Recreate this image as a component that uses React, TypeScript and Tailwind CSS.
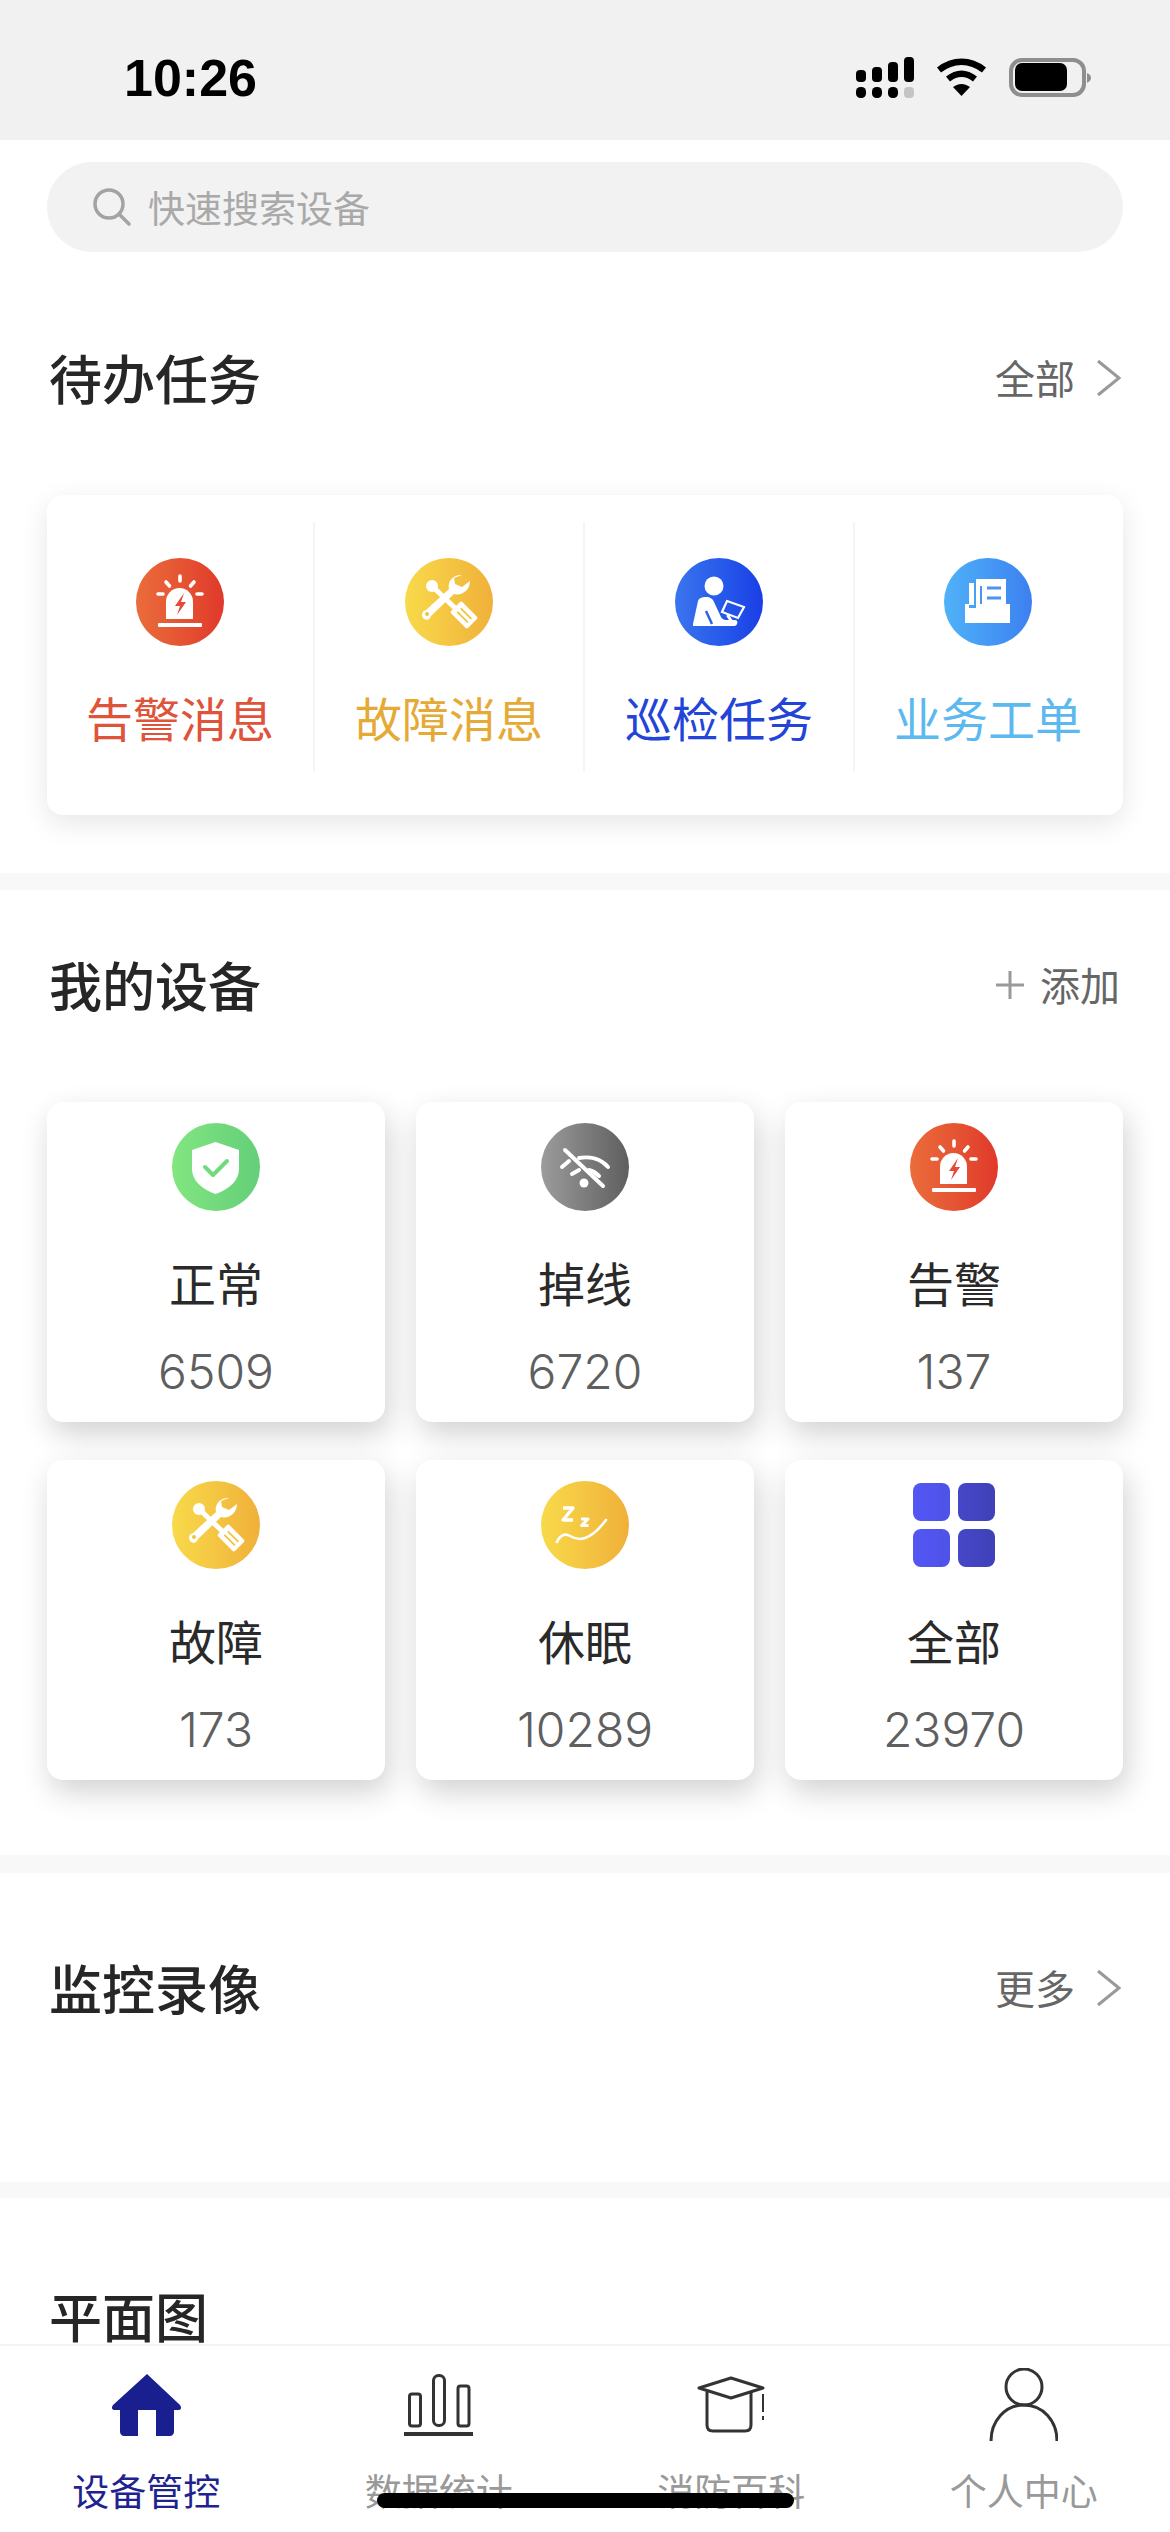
const cjk = { fontFamily: '"Noto Sans CJK SC", "Noto Sans", sans-serif' };

function AlarmIcon({ fill = "#e4493a" }: { fill?: string }) {
  return (
    <svg viewBox="0 0 88 88" className="w-full h-full">
      <path d="M30 61V44a13.5 14 0 0 1 27 0v17z" fill="#fff" />
      <path d="M48 35 39 48h5l-3 9 9-13h-5z" fill={fill} />
      <rect x="22" y="65" width="44" height="4" rx="1" fill="#fff" />
      <g stroke="#fff" strokeWidth="3.6" strokeLinecap="round" fill="none">
        <path d="M44 18v5M30 24l3.5 4M58 24l-3.5 4M22 36h5M61 36h5" />
      </g>
    </svg>
  );
}

function ToolsIcon() {
  return (
    <svg viewBox="0 0 88 88" className="w-full h-full">
      <path
        d="M57 17c-8-1-15 6-13 14L21 52c-4 1-5 5-3 8 3 3 7 2 8-2l23-22c8 2 16-4 16-13l-8 6-7-3-1-6z"
        fill="#fff"
      />
      <circle cx="22" cy="56" r="2" fill="#f3c23f" />
      <path d="M26 27 50 50" stroke="#fff" strokeWidth="5" />
      <circle cx="27" cy="28" r="6" fill="#fff" />
      <g transform="rotate(-45 59 57)">
        <rect x="51" y="45" width="16" height="24" rx="2" fill="#fff" />
        <path d="M56.500 50v15M61.500 50v15" stroke="#f3c23f" strokeWidth="1.800" />
      </g>
    </svg>
  );
}

function InspectIcon() {
  return (
    <svg viewBox="0 0 88 88" className="w-full h-full">
      <circle cx="39" cy="28" r="9.5" fill="#fff" />
      <path
        d="M18 66l5-23c1-3 4-4 8-4 4 0 7 2 8 5l7 15c1 2 3 3 5 3h9c2 0 3 2 2 4s-2 2-4 2H18z"
        fill="#fff"
      />
      <path d="M31 53l6 13" stroke="#2f62ea" strokeWidth="2.5" />
      <path d="M52 43l17 6-6 11-16-6z" fill="none" stroke="#fff" strokeWidth="2.2" />
      <path d="M53 58l4 6" stroke="#fff" strokeWidth="3" strokeLinecap="round" />
    </svg>
  );
}

function TrayIcon() {
  return (
    <svg viewBox="0 0 88 88" className="w-full h-full">
      <path d="M25 25h5v22h-5z" fill="#fff" />
      <path d="M32 21h30v29H47l-2 3-3-3H32z" fill="#fff" />
      <path d="M37 28v18" stroke="#4a94f4" strokeWidth="2" />
      <path d="M43 30h14M43 40h14" stroke="#4a94f4" strokeWidth="3" />
      <path d="M21 46h4v4h37v-4h4v19H21z" fill="#fff" />
    </svg>
  );
}

function ShieldIcon() {
  return (
    <svg viewBox="0 0 88 88" className="w-full h-full">
      <path d="M43.5 19 67 27v19c0 11-9 20-23.500 25C29 66 20 57 20 46V27z" fill="#fff" />
      <path d="M33 44l8 8 14-14" fill="none" stroke="#6fdb7e" strokeWidth="4" strokeLinecap="round" strokeLinejoin="round" />
    </svg>
  );
}

function WifiOffIcon() {
  return (
    <svg viewBox="0 0 88 88" className="w-full h-full">
      <g fill="none" stroke="#fff" strokeWidth="4" strokeLinecap="round">
        <path d="M24 27 62 63" />
        <path d="M38 35c11-2 22 1 29 9" />
        <path d="M21 44l7-6" />
        <path d="M31 51l7-4" />
        <path d="M48 47c4 1 7 3 10 6" />
      </g>
      <circle cx="43" cy="60" r="4.500" fill="#fff" />
    </svg>
  );
}

function SleepIcon() {
  return (
    <svg viewBox="0 0 88 88" className="w-full h-full">
      <g fill="none" stroke="#fff" strokeLinejoin="round">
        <path d="M22 27h10L22 39h10" strokeWidth="3.4" />
        <path d="M40 38h7l-6.500 6.500h7" strokeWidth="3" />
        <path d="M16 61c3-7 8-9 13-6 5 3 10 4 15 2 9-3 15-10 21-18" strokeWidth="2.6" strokeLinecap="round" />
      </g>
    </svg>
  );
}

function GridIcon() {
  return (
    <div className="grid grid-cols-2 gap-[8px] w-[82px] h-[84px]">
      {[0, 1].map((col) =>
        [0, 1].map((row) => (
          <div
            key={`${col}-${row}`}
            className={
              row === 0
                ? "rounded-[8px] bg-linear-to-r from-[#5356f3] to-[#4f52e8]"
                : "rounded-[8px] bg-linear-to-r from-[#4547c8] to-[#3f41b8]"
            }
          />
        )),
      )}
    </div>
  );
}

function Circle({ gradient, children }: { gradient: string; children: React.ReactNode }) {
  return <div className={`w-[88px] h-[88px] rounded-full ${gradient}`}>{children}</div>;
}

const red = "bg-linear-to-r from-[#ea6c3b] to-[#e0382b]";
const yellow = "bg-linear-to-r from-[#f8da4a] to-[#f0b03a]";

const tasks = [
  { label: "告警消息", color: "text-[#e0533b]", gradient: red, icon: <AlarmIcon /> },
  { label: "故障消息", color: "text-[#e5a935]", gradient: yellow, icon: <ToolsIcon /> },
  { label: "巡检任务", color: "text-[#2244d8]", gradient: "bg-linear-to-r from-[#3b74ee] to-[#1b3de6]", icon: <InspectIcon /> },
  { label: "业务工单", color: "text-[#5cb9ef]", gradient: "bg-linear-to-r from-[#50b2f8] to-[#3d80f0]", icon: <TrayIcon /> },
];

const devices = [
  { label: "正常", count: "6509", gradient: "bg-linear-to-r from-[#82e680] to-[#63cf79]", icon: <ShieldIcon /> },
  { label: "掉线", count: "6720", gradient: "bg-linear-to-r from-[#9c9c9c] to-[#5f5f5f]", icon: <WifiOffIcon /> },
  { label: "告警", count: "137", gradient: red, icon: <AlarmIcon /> },
  { label: "故障", count: "173", gradient: yellow, icon: <ToolsIcon /> },
  { label: "休眠", count: "10289", gradient: yellow, icon: <SleepIcon /> },
  { label: "全部", count: "23970", gradient: "", icon: <GridIcon /> },
];

function Chevron() {
  return (
    <svg viewBox="0 0 27 38" className="w-[27px] h-[38px] ml-[20px]">
      <path d="M3 2l21 17L3 36" fill="none" stroke="#999" strokeWidth="3" />
    </svg>
  );
}

function SectionHeader({ title, action, mt }: { title: string; action: React.ReactNode; mt: string }) {
  return (
    <div className={`h-[80px] ${mt} pl-[49px] pr-[48px] flex items-center justify-between`}>
      <h2 className="text-[53px] font-medium text-[#262626] leading-[80px] mb-[3px]">{title}</h2>
      <div className="flex items-center text-[40px] text-[#666]">{action}</div>
    </div>
  );
}

function Band({ h }: { h: string }) {
  return <div className={`${h} bg-[#f8f8f8]`} />;
}

function StatusIcons() {
  return (
    <svg viewBox="0 0 235 41" className="w-[235px] h-[41px]">
      <rect x="0" y="13" width="10" height="12" rx="4" />
      <rect x="16" y="10" width="10" height="15" rx="4" />
      <rect x="32" y="5" width="10" height="20" rx="4" />
      <rect x="48" y="0" width="10" height="25" rx="4" />
      <rect x="0" y="30" width="10" height="11" rx="4.500" />
      <rect x="16" y="30" width="10" height="11" rx="4.500" />
      <rect x="32" y="30" width="10" height="11" rx="4.500" />
      <rect x="48" y="30" width="10" height="11" rx="4" fill="#c4c4c4" />
      <g fill="none" stroke="#000" strokeWidth="6.500">
        <path d="M83 13c14-11 31-11 45 0" />
        <path d="M92 22c9-7 18-7 27 0" />
      </g>
      <path d="M97 30c6-4 11-4 17 0l-8.500 9z" />
      <rect x="155" y="3" width="73" height="35" rx="11" fill="none" stroke="#8e8e8e" strokeWidth="4" />
      <rect x="159" y="6" width="52" height="28" rx="7" />
      <path d="M231 16c3 1 4 3 4 5s-1 3-4 5z" fill="#8e8e8e" />
    </svg>
  );
}

function NavHome() {
  return (
    <svg viewBox="0 0 69 62" className="w-[69px] h-[62px]">
      <path
        d="M35 0 68 31c2 3 1 5-2 5h-4v22c0 2-2 4-4 4H44V36H26v26H12c-2 0-4-2-4-4V36H3c-3 0-4-2-2-5z"
        fill="#1a1f8f"
      />
    </svg>
  );
}

function NavStats() {
  return (
    <svg viewBox="0 0 69 62" className="w-[69px] h-[62px]" fill="none" stroke="#333" strokeWidth="3">
      <rect x="5.500" y="20" width="11" height="32" rx="2.500" />
      <rect x="29.500" y="1.500" width="11" height="50" rx="5" />
      <rect x="54" y="12" width="11" height="40" rx="2.500" />
      <path d="M0 60h69" strokeWidth="4" />
    </svg>
  );
}

function NavCap() {
  return (
    <svg viewBox="0 0 69 58" className="w-[69px] h-[58px]" fill="none" stroke="#333" strokeWidth="3">
      <path d="M34 2 66 12 34 22 2 12z" strokeLinejoin="round" />
      <path d="M10 16v33c0 4 2 6 6 6h32c4 0 6-2 6-6V15" />
      <path d="M66 18v18" strokeWidth="2" />
      <path d="M66 40v4" strokeWidth="2" />
    </svg>
  );
}

function NavUser() {
  return (
    <svg viewBox="0 0 69 74" className="w-[69px] h-[74px]" fill="none" stroke="#333" strokeWidth="3">
      <ellipse cx="35" cy="19" rx="18" ry="18" />
      <path d="M2 73c0-20 14-36 33-36s33 16 33 36" />
    </svg>
  );
}

const navItems = [
  { label: "设备管控", color: "text-[#1f2390]", icon: <NavHome /> },
  { label: "数据统计", color: "text-[#999]", icon: <NavStats /> },
  { label: "消防百科", color: "text-[#999]", icon: <NavCap /> },
  { label: "个人中心", color: "text-[#999]", icon: <NavUser /> },
];

export default function App() {
  return (
    <div className="relative w-[1170px] h-[2532px] overflow-hidden bg-white" style={cjk}>
      {/* 状态栏 */}
      <div className="h-[140px] bg-[#f1f1f1] pl-[124px] pr-[79px] pt-[15px] flex items-center justify-between">
        <span className="text-[52px] font-bold text-black font-['Liberation_Sans',sans-serif]">10:26</span>
        <StatusIcons />
      </div>

      {/* 搜索 */}
      <div className="pt-[22px] px-[47px]">
        <div className="h-[90px] rounded-full bg-[#f2f2f2] pl-[45px] flex items-center gap-[16px]">
          <svg viewBox="0 0 40 40" className="w-[40px] h-[40px]" fill="none" stroke="#a3a3a3" strokeWidth="3.500">
            <circle cx="17" cy="17" r="14" />
            <path d="M27 27l10 10" strokeLinecap="round" />
          </svg>
          <span className="text-[37px] text-[#a9a9a9] mt-[2px]">快速搜索设备</span>
        </div>
      </div>

      {/* 待办任务 */}
      <SectionHeader
        title="待办任务"
        mt="mt-[86px]"
        action={
          <>
            <span className="mb-[3px]">全部</span>
            <Chevron />
          </>
        }
      />
      <div className="mx-[47px] mt-[77px] mb-[58px] h-[320px] rounded-[16px] bg-white shadow-[0_8px_28px_rgba(0,0,0,0.1)] grid grid-cols-[268px_270px_270px_268px]">
        {tasks.map((t, i) => (
          <div key={t.label} className="pt-[27px]">
            <div
              className={`h-[250px] flex flex-col items-center pt-[36px] border-r-2 ${
                i < 3 ? "border-[#f5f5f5]" : "border-transparent"
              }`}
            >
              <Circle gradient={t.gradient}>{t.icon}</Circle>
              <div className={`mt-[41px] h-[60px] leading-[60px] text-[47px] ${t.color}`}>{t.label}</div>
            </div>
          </div>
        ))}
      </div>
      <Band h="h-[17px]" />

      {/* 我的设备 */}
      <SectionHeader
        title="我的设备"
        mt="mt-[55px]"
        action={
          <>
            <svg viewBox="0 0 28 28" className="w-[28px] h-[28px] mr-[16px]">
              <path d="M14 0v28M0 14h28" stroke="#999" strokeWidth="3" />
            </svg>
            <span className="mb-[3px] mr-[2px]">添加</span>
          </>
        }
      />
      <div className="mx-[47px] mt-[77px] mb-[75px] grid grid-cols-3 gap-x-[31px] gap-y-[38px]">
        {devices.map((d) => (
          <div
            key={d.label}
            className="h-[320px] rounded-[16px] bg-white shadow-[4px_12px_30px_rgba(0,0,0,0.18)] flex flex-col items-center pt-[21px]"
          >
            <div className="w-[88px] h-[88px] flex items-center justify-center">
              {d.gradient ? <Circle gradient={d.gradient}>{d.icon}</Circle> : d.icon}
            </div>
            <div className="mt-[41px] h-[60px] leading-[60px] text-[47px] text-[#2a2a2a]">{d.label}</div>
            <div className="mt-[30px] h-[60px] leading-[60px] text-[48px] font-light text-[#5f5f5f] font-['Inter',sans-serif]">
              {d.count}
            </div>
          </div>
        ))}
      </div>
      <Band h="h-[18px]" />

      {/* 监控录像 */}
      <SectionHeader
        title="监控录像"
        mt="mt-[75px]"
        action={
          <>
            <span className="mb-[3px]">更多</span>
            <Chevron />
          </>
        }
      />
      <div className="h-[154px]" />
      <Band h="h-[16px]" />

      {/* 平面图 */}
      <SectionHeader title="平面图" mt="mt-[78px]" action={null} />

      {/* 底部导航 */}
      <div className="absolute left-0 right-0 bottom-0 h-[188px] bg-white border-t-2 border-[#f3f3f3] grid grid-cols-4">
        {navItems.map((n) => (
          <div key={n.label} className="flex flex-col items-center">
            <div className="h-[110px] flex items-center justify-center pt-[7px]">{n.icon}</div>
            <div className={`h-[50px] leading-[50px] mt-[9px] text-[37px] ${n.color}`}>{n.label}</div>
          </div>
        ))}
      </div>
      <div className="absolute left-[377px] top-[2493px] w-[417px] h-[15px] rounded-full bg-black" />
    </div>
  );
}
